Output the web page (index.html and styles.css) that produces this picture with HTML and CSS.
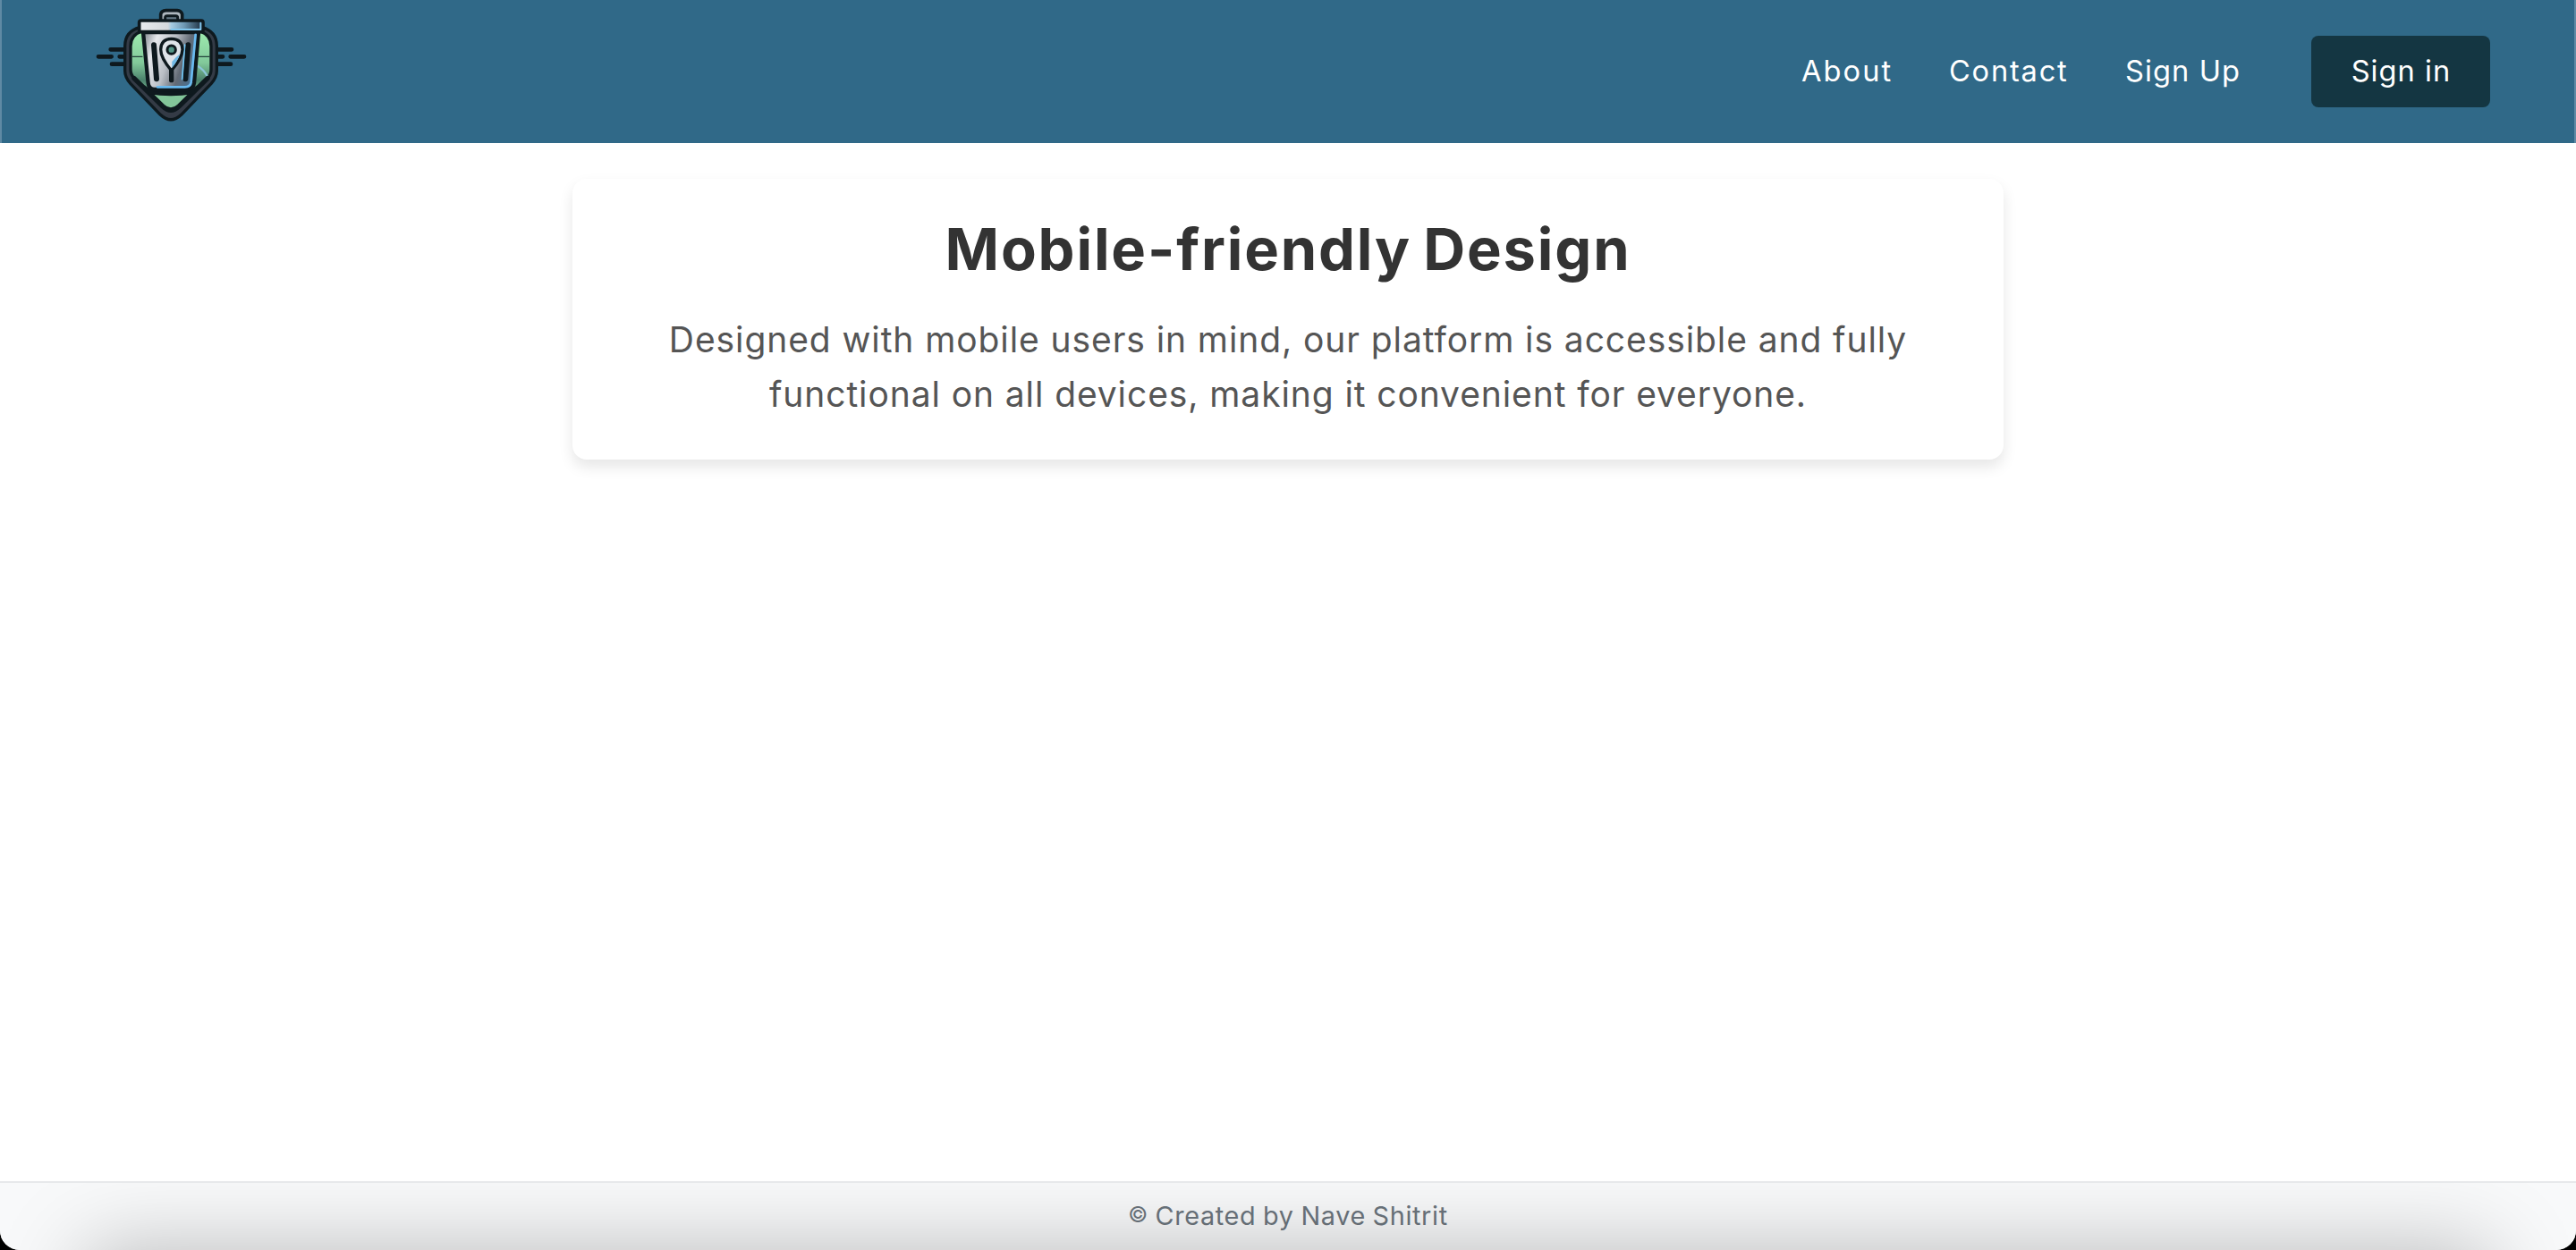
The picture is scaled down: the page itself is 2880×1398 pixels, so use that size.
FILE: index.html
```html
<!DOCTYPE html>
<html lang="en">
<head>
<meta charset="utf-8">
<title>Mobile-friendly Design</title>
<link rel="stylesheet" href="styles.css">
</head>
<body>
<div class="page">
  <header class="header">
    <a class="brand" href="#" aria-label="Home">
      <svg class="logo" viewBox="0 0 600 480" fill="none" stroke-linecap="round" stroke-linejoin="round">
        <defs>
          <linearGradient id="leaf" x1="0" y1="0" x2="0" y2="1">
            <stop offset="0" stop-color="#9fecb0"/><stop offset=".4" stop-color="#82c99a"/><stop offset=".62" stop-color="#4b826c"/><stop offset=".8" stop-color="#83c69a"/><stop offset="1" stop-color="#83c69a"/>
          </linearGradient>
          <linearGradient id="metal" x1="0" y1="0" x2="1" y2=".35">
            <stop offset="0" stop-color="#777d86"/><stop offset=".25" stop-color="#e6e8ec"/><stop offset=".55" stop-color="#b9bec5"/><stop offset=".8" stop-color="#626a75"/><stop offset="1" stop-color="#4d6f8c"/>
          </linearGradient>
          <linearGradient id="lid" x1="0" y1="0" x2="1" y2="0">
            <stop offset="0" stop-color="#e9ebee"/><stop offset=".45" stop-color="#d4d8dc"/><stop offset=".5" stop-color="#a6cbe2"/><stop offset=".7" stop-color="#6f99b4"/><stop offset="1" stop-color="#18293a"/>
          </linearGradient>
        </defs>
        <path d="M101 166H160M60 190H76M76 190H104M131 190H150M105 215H160M450 166H507M450 190H477M503 190H549M450 215H504" stroke="#0e191e" stroke-width="14"/>
        <path d="M199 92Q149 105 149 155V238Q149 260 168 281L268 385Q303 418 338 385L438 281Q457 260 457 238V155Q457 105 407 92Z" fill="#343b46" stroke="#0e191e" stroke-width="10"/>
        <path d="M205 105Q168 118 168 155V234Q168 250 180 263L276 357Q303 382 330 357L426 263Q438 250 438 234V155Q438 118 401 105Z" fill="url(#leaf)" stroke="#0e191e" stroke-width="10"/>
        <path d="M174 190H207M396 190H432" stroke="#23433b" stroke-width="4"/>
        <path d="M394 222Q414 234 425 256" stroke="#8bc5d5" stroke-width="7"/>
        <path d="M180 263L276 357Q303 382 330 357L426 263" stroke="#0e191e" stroke-width="16"/>
        <path d="M214 285L230 297H376L392 285L376 316Q303 328 230 316Z" fill="#0e191e"/>
        <path d="M210 108H396L381 279Q378 300 357 300H249Q229 300 227 279Z" fill="url(#metal)" stroke="#0e191e" stroke-width="13"/>
        <path d="M386 116L371 275Q369 292 350 292H258" stroke="#69baf0" stroke-width="8"/>
        <path d="M246 151L255 265M361 151L352 265" stroke="#0e191e" stroke-width="18"/>
        <path d="M350 150L341 266" stroke="#70c6f4" stroke-width="5"/>
        <path d="M305 237V269" stroke="#0e191e" stroke-width="16"/>
        <path d="M305 237Q269 195 269 166Q270 131 305 130Q341 131 342 166Q341 195 305 237Z" fill="#dfe4e9" stroke="#0e191e" stroke-width="10"/>
        <path d="M334 181Q326 205 307 228V207Q321 190 334 181Z" fill="#70b9e5"/>
        <circle cx="305" cy="167" r="14" fill="#549687" stroke="#0e191e" stroke-width="9"/>
        <path d="M269 65V48Q271 36 287 35H324Q338 36 341 48V65" fill="#aeb7be" stroke="#0e191e" stroke-width="11"/>
        <path d="M284 64V57Q285 53 290 53H320Q326 53 326 59V64" fill="#667a87" stroke="#0e191e" stroke-width="9"/>
        <rect x="197" y="69" width="214" height="38" rx="6" fill="url(#lid)" stroke="#0e191e" stroke-width="11"/>
        <path d="M305 99H403V77" stroke="#82c6ed" stroke-width="6"/>
      </svg>
    </a>
    <nav class="nav">
      <a class="link about" href="#">About</a>
      <a class="link contact" href="#">Contact</a>
      <a class="link signup" href="#">Sign Up</a>
      <a class="button" href="#">Sign in</a>
    </nav>
  </header>
  <main class="main">
    <section class="card">
      <h1>Mobile-friendly Design</h1>
      <p><span class="line">Designed with mobile users in mind, our platform is accessible and fully</span> <span class="line second">functional on all devices, making it convenient for everyone.</span></p>
    </section>
  </main>
  <footer class="footer"><span><span class="copy">©</span> Created by Nave Shitrit</span></footer>
</div>
</body>
</html>
```
FILE: styles.css
```css
* { box-sizing: border-box; }
body { margin: 0; background: #000; font-family: Inter, "Liberation Sans", sans-serif; }
.page { height: 1398px; display: flex; flex-direction: column; background: #fff; border-radius: 0 0 22px 22px; overflow: hidden; }
.header { height: 160px; display: flex; align-items: center; justify-content: space-between; padding: 0 94px 0 88px; background: #306988; border: solid #5f8aa4; border-width: 0 2px; }
.brand, .logo { display: block; width: 200px; height: 160px; }
.nav { display: flex; align-items: center; font-size: 32.6px; line-height: 40px; color: #fff; }
.nav a { color: inherit; text-decoration: none; white-space: nowrap; }
.link { padding-bottom: 2px; }
.about { width: 165px; letter-spacing: 2.1px; }
.contact { width: 197px; letter-spacing: 1.8px; }
.signup { width: 208px; letter-spacing: 1.1px; }
.button { width: 200px; height: 80px; padding: 0 0 2px 1px; display: grid; place-items: center; letter-spacing: 1.05px; background: #143642; border-radius: 8px; }
.main { flex: 1; padding-top: 40px; }
.card { width: 1600px; height: 314px; margin: 0 auto; padding: 39px 40px 40px; text-align: center; border-radius: 16px; background: #fff; box-shadow: 0 8px 16px rgba(0, 0, 0, .1); }
h1 { margin: 0 0 30px; font-size: 65px; line-height: 80px; font-weight: 700; letter-spacing: 1.85px; word-spacing: -4px; color: #333; }
p { margin: 0; font-size: 39px; line-height: 61.4px; letter-spacing: .91px; color: #555; }
.line { display: block; white-space: nowrap; }
.second { letter-spacing: .9px; }
.footer { position: relative; height: 77px; padding-bottom: 2px; overflow: hidden; display: grid; place-items: center; border-top: 2px solid #e7e9eb; background: #f8f9fa; color: #6c757d; font-size: 28.8px; letter-spacing: .65px; word-spacing: -1px; }
.copy { font-size: 24px; vertical-align: 3px; }
.footer::after { content: ""; position: absolute; left: 96px; right: 96px; top: 100%; height: 140px; box-shadow: 0 0 96px rgba(0, 0, 0, .26); }
```
